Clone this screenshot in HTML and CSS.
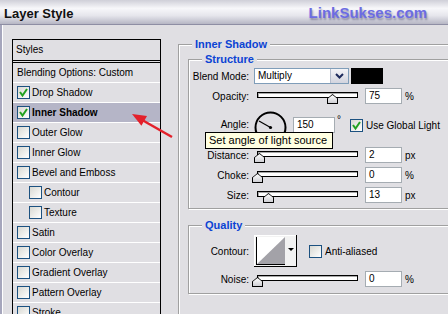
FILE: index.html
```html
<!DOCTYPE html>
<html>
<head>
    <title>Layer Style</title>
    <link rel="stylesheet" href="styles.css">
</head>
<body>
<div class="window">
    <div class="titlebar">
        <span class="title">Layer Style</span>
        <span class="brand">LinkSukses.com</span>
    </div>

    <div class="main">
        <div class="styles-list">
            <div class="list-head">Styles</div>
            <div class="list-row blend">Blending Options: Custom</div>
            <div class="list-row"><span class="check"><svg width="11" height="11"><polyline points="2,5 4.5,8.5 9,2" fill="none" stroke="#21a121" stroke-width="2"/></svg></span>Drop Shadow</div>
            <div class="list-row active"><span class="check"><svg width="11" height="11"><polyline points="2,5 4.5,8.5 9,2" fill="none" stroke="#21a121" stroke-width="2"/></svg></span>Inner Shadow</div>
            <div class="list-row"><span class="check"></span>Outer Glow</div>
            <div class="list-row"><span class="check"></span>Inner Glow</div>
            <div class="list-row"><span class="check"></span>Bevel and Emboss</div>
            <div class="list-row sub"><span class="check"></span>Contour</div>
            <div class="list-row sub"><span class="check"></span>Texture</div>
            <div class="list-row"><span class="check"></span>Satin</div>
            <div class="list-row"><span class="check"></span>Color Overlay</div>
            <div class="list-row"><span class="check"></span>Gradient Overlay</div>
            <div class="list-row"><span class="check"></span>Pattern Overlay</div>
            <div class="list-row"><span class="check"></span>Stroke</div>
        </div>

        <div class="panel">
            <div class="group outer">
                <div class="group-title">Inner Shadow</div>

                <div class="group inner structure">
                    <div class="group-title">Structure</div>

                    <div class="field f-blend">
                        <span class="lbl">Blend Mode:</span>
                        <div class="select">
                            <span class="select-text">Multiply</span>
                            <span class="select-btn"><svg width="9" height="6"><polyline points="1,1 4.5,4.5 8,1" fill="none" stroke="#1d2a5c" stroke-width="2"/></svg></span>
                        </div>
                        <span class="swatch"></span>
                    </div>

                    <div class="field f-gap4">
                        <span class="lbl">Opacity:</span>
                        <div class="slider"><span class="thumb" style="left:70px"></span></div>
                        <span class="num">75</span>
                        <span class="unit">%</span>
                    </div>

                    <div class="field f-angle">
                        <span class="lbl angle-lbl">Angle:</span>
                        <svg class="dial" width="33" height="33">
                            <circle cx="16.5" cy="16.5" r="15" fill="none" stroke="#000" stroke-width="2"/>
                            <line x1="16.5" y1="16.5" x2="5" y2="10" stroke="#000" stroke-width="1.2"/>
                            <circle cx="16.5" cy="16.5" r="1.6" fill="#000"/>
                        </svg>
                        <div class="angle-ctrl">
                            <span class="num wide">150</span>
                            <span class="deg">°</span>
                            <span class="check"><svg width="11" height="11"><polyline points="2,5 4.5,8.5 9,2" fill="none" stroke="#21a121" stroke-width="2"/></svg></span>
                            <span>Use Global Light</span>
                        </div>
                    </div>

                    <div class="field f-gap3">
                        <span class="lbl">Distance:</span>
                        <div class="slider"><span class="thumb" style="left:-3px"></span></div>
                        <span class="num">2</span>
                        <span class="unit">px</span>
                    </div>

                    <div class="field f-gap4">
                        <span class="lbl">Choke:</span>
                        <div class="slider"><span class="thumb" style="left:-5px"></span></div>
                        <span class="num">0</span>
                        <span class="unit">%</span>
                    </div>

                    <div class="field f-gap4">
                        <span class="lbl">Size:</span>
                        <div class="slider"><span class="thumb" style="left:6px"></span></div>
                        <span class="num">13</span>
                        <span class="unit">px</span>
                    </div>
                </div>

                <div class="group inner quality">
                    <div class="group-title">Quality</div>

                    <div class="field f-contour">
                        <span class="lbl">Contour:</span>
                        <svg class="contour" width="43" height="32">
                            <rect x="0" y="0" width="43" height="32" fill="#f2f2f2"/>
                            <rect x="2" y="2" width="29" height="28" fill="#fff"/>
                            <polygon points="2,30 31,2 31,30" fill="#a3a2a8"/>
                            <line x1="2.5" y1="2" x2="2.5" y2="30" stroke="#000"/>
                            <line x1="2" y1="29.5" x2="31" y2="29.5" stroke="#000"/>
                            <polygon points="34,13 40,13 37,16" fill="#000"/>
                            <line x1="0" y1="0.5" x2="43" y2="0.5" stroke="#fff"/>
                            <line x1="0.5" y1="0" x2="0.5" y2="32" stroke="#fff"/>
                            <line x1="42.5" y1="0" x2="42.5" y2="32" stroke="#000"/>
                            <line x1="0" y1="31.5" x2="43" y2="31.5" stroke="#000"/>
                        </svg>
                        <span class="check aa"></span>
                        <span>Anti-aliased</span>
                    </div>

                    <div class="field f-gap4">
                        <span class="lbl">Noise:</span>
                        <div class="slider"><span class="thumb" style="left:-5px"></span></div>
                        <span class="num">0</span>
                        <span class="unit">%</span>
                    </div>
                </div>
            </div>
        </div>
    </div>

    <div class="tooltip">Set angle of light source</div>

    <svg class="arrow" width="448" height="314">
        <line x1="172" y1="137" x2="143" y2="120.5" stroke="#e3202b" stroke-width="2.5"/>
        <polygon points="132,114 147,116 141.4,125.8" fill="#e3202b"/>
    </svg>
</div>
</body>
</html>
```

FILE: styles.css
```css
body {
    margin: 0;
    background-color: #e0dfe3;
    font-family: "Liberation Sans", Arial, sans-serif;
    font-size: 10px;
    color: #000;
    overflow: hidden;
}

.window {
    position: relative;
    width: 448px;
    height: 314px;
    overflow: hidden;
}

/* title bar */
.titlebar {
    height: 24px;
    border-bottom: 1px solid #8e8ea4;
    background: linear-gradient(#cfcfd8 0%, #f7f7fa 35%, #e6e6ec 65%, #b6b6c4 100%);
    display: flex;
    align-items: center;
    justify-content: space-between;
    padding: 0 21px 0 4px;
}

.title {
    font-size: 13px;
    font-weight: bold;
    color: #111;
    margin-top: 2px;
}

.brand {
    font-size: 15px;
    font-weight: bold;
    color: #6c6ce2;
    text-shadow: 1px 2px 2px rgba(40, 40, 90, 0.45);
}

.main {
    display: flex;
    align-items: flex-start;
    padding-top: 14px;
    border-left: 2px solid #a6a6bc;
    box-shadow: inset 1px 0 0 #fff;
    height: 300px;
}

/* styles list on the left */
.styles-list {
    width: 149px;
    margin-left: 10px;
    border: 1px solid #000;
    border-bottom: none;
    box-sizing: border-box;
    flex: none;
}

.list-head {
    height: 20px;
    line-height: 20px;
    padding-left: 3px;
    border-bottom: 3px double #000;
}

.list-row {
    height: 19px;
    display: flex;
    align-items: center;
    padding-left: 4px;
    border-bottom: 1px solid #fff;
    white-space: nowrap;
}

.list-row.sub {
    padding-left: 16px;
}

.list-row.active {
    background-color: #b5b5c7;
    font-weight: bold;
}

.list-row .check {
    margin-right: 2px;
}

.check {
    width: 13px;
    height: 13px;
    box-sizing: border-box;
    border: 1px solid #1c5180;
    background: linear-gradient(135deg, #d8d8d2, #fff);
    flex: none;
    display: flex;
}

/* right panel */
.panel {
    margin-left: 17px;
    margin-top: 5px;
    flex: none;
}

.group {
    border: 1px solid #a0a0a0;
    box-shadow: inset 1px 1px 0 #fff, 1px 1px 0 #fff;
}

.group.outer {
    width: 300px;
    border-right: none;
    padding-bottom: 30px;
}

.group.inner {
    margin-left: 9px;
    border-right: none;
}

.group-title {
    width: max-content;
    height: 13px;
    line-height: 13px;
    margin: -7px 0 0 13px;
    padding: 0 3px;
    background-color: #e0dfe3;
    color: #0b43d4;
    font-size: 11px;
    font-weight: bold;
}

.structure {
    margin-top: 8px;
    padding-bottom: 5px;
}

.quality {
    margin-top: 16px;
    padding-bottom: 6px;
}

.field {
    display: flex;
    align-items: center;
    height: 16px;
    white-space: nowrap;
}

.f-blend {
    margin-top: 2px;
}

.f-gap3 {
    margin-top: 3px;
}

.f-gap4 {
    margin-top: 4px;
}

.lbl {
    width: 60px;
    margin-right: 5px;
    text-align: right;
    flex: none;
}

.select {
    width: 95px;
    height: 16px;
    box-sizing: border-box;
    border: 1px solid #7f9db9;
    background-color: #fff;
    display: flex;
}

.select-text {
    flex: 1;
    padding-left: 3px;
    line-height: 14px;
}

.select-btn {
    width: 17px;
    border-left: 1px solid #b4bccc;
    background: linear-gradient(#f4f4f8, #d2d4de);
    display: flex;
    align-items: center;
    justify-content: center;
}

.swatch {
    width: 32px;
    height: 16px;
    margin-left: 2px;
    background-color: #000;
}

.slider {
    position: relative;
    width: 101px;
    height: 16px;
    margin-left: 3px;
}

.slider::before {
    content: "";
    position: absolute;
    left: 0;
    top: 4px;
    width: 101px;
    height: 6px;
    box-sizing: border-box;
    border: 1px solid #000;
    background-color: #fff;
    box-shadow: inset 1px 1px 0 #a8a8a8;
}

.thumb {
    position: absolute;
    top: 6px;
    width: 11px;
    height: 10px;
    background-color: #000;
    clip-path: polygon(50% 0, 100% 45%, 100% 100%, 0 100%, 0 45%);
}

.thumb::after {
    content: "";
    position: absolute;
    left: 1px;
    top: 1px;
    width: 9px;
    height: 8px;
    background: linear-gradient(#fff, #cfcfd4);
    clip-path: polygon(50% 0, 100% 45%, 100% 100%, 0 100%, 0 45%);
}

.num {
    width: 37px;
    height: 16px;
    box-sizing: border-box;
    border: 1px solid #a5acb2;
    background-color: #fff;
    padding-left: 3px;
    line-height: 14px;
    margin-left: 7px;
    flex: none;
}

.unit {
    margin-left: 3px;
}

.f-angle {
    margin-top: 7px;
    height: 33px;
    align-items: flex-start;
}

.angle-lbl {
    margin-top: 6px;
    line-height: 16px;
}

.dial {
    flex: none;
}

.angle-ctrl {
    display: flex;
    align-items: center;
    height: 16px;
    margin-top: 6px;
}

.num.wide {
    width: 42px;
    margin-left: 6px;
}

.deg {
    align-self: flex-start;
    margin: -3px 0 0 2px;
}

.angle-ctrl .check {
    margin: 0 3px 0 9px;
}

.f-contour {
    margin-top: 3px;
    height: 32px;
}

.contour {
    flex: none;
}

.check.aa {
    margin: 0 3px 0 12px;
}

/* overlays */
.tooltip {
    position: absolute;
    left: 205px;
    top: 132px;
    width: 128px;
    height: 17px;
    box-sizing: border-box;
    border: 1px solid #000;
    background-color: #ffffe1;
    padding-left: 3px;
    font-size: 11px;
    line-height: 15px;
    white-space: nowrap;
}

.arrow {
    position: absolute;
    left: 0;
    top: 0;
    pointer-events: none;
}
```
